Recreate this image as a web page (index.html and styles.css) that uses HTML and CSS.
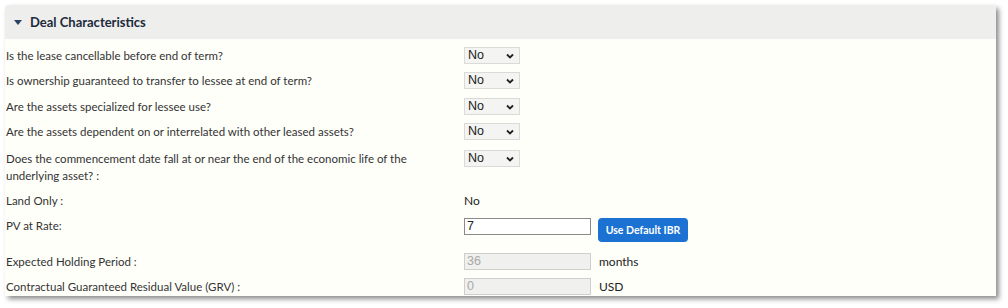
FILE: index.html
```html
<!DOCTYPE html>
<html>
<head>
<meta charset="utf-8">
<link rel="stylesheet" href="styles.css">
</head>
<body>
<div class="panel">
  <div class="panel-header">
    <svg class="caret" width="8" height="5" viewBox="0 0 8 5"><path d="M0 0H8L4 5Z" fill="#2a4468"/></svg>
    <span class="title">Deal Characteristics</span>
  </div>
  <div class="panel-body">
    <div class="row">
      <div class="label">Is the lease cancellable before end of term?</div>
      <div class="value"><div class="select"><span>No</span><svg width="8" height="6" viewBox="0 0 8 6"><path d="M1 1.5L4 4.5L7 1.5" stroke="#222" stroke-width="1.8" fill="none"/></svg></div></div>
    </div>
    <div class="row">
      <div class="label">Is ownership guaranteed to transfer to lessee at end of term?</div>
      <div class="value"><div class="select"><span>No</span><svg width="8" height="6" viewBox="0 0 8 6"><path d="M1 1.5L4 4.5L7 1.5" stroke="#222" stroke-width="1.8" fill="none"/></svg></div></div>
    </div>
    <div class="row r3">
      <div class="label">Are the assets specialized for lessee use?</div>
      <div class="value"><div class="select"><span>No</span><svg width="8" height="6" viewBox="0 0 8 6"><path d="M1 1.5L4 4.5L7 1.5" stroke="#222" stroke-width="1.8" fill="none"/></svg></div></div>
    </div>
    <div class="row">
      <div class="label">Are the assets dependent on or interrelated with other leased assets?</div>
      <div class="value"><div class="select"><span>No</span><svg width="8" height="6" viewBox="0 0 8 6"><path d="M1 1.5L4 4.5L7 1.5" stroke="#222" stroke-width="1.8" fill="none"/></svg></div></div>
    </div>
    <div class="row multi">
      <div class="label">Does the commencement date fall at or near the end of the economic life of the underlying asset? :</div>
      <div class="value"><div class="select"><span>No</span><svg width="8" height="6" viewBox="0 0 8 6"><path d="M1 1.5L4 4.5L7 1.5" stroke="#222" stroke-width="1.8" fill="none"/></svg></div></div>
    </div>
    <div class="row">
      <div class="label">Land Only :</div>
      <div class="value"><span class="plain">No</span></div>
    </div>
    <div class="row pv">
      <div class="label">PV at Rate:</div>
      <div class="value"><div class="input">7</div><button class="btn">Use Default IBR</button></div>
    </div>
    <div class="row">
      <div class="label">Expected Holding Period :</div>
      <div class="value"><div class="input disabled">36</div><span class="unit">months</span></div>
    </div>
    <div class="row">
      <div class="label">Contractual Guaranteed Residual Value (GRV) :</div>
      <div class="value"><div class="input disabled">0</div><span class="unit">USD</span></div>
    </div>
  </div>
</div>
</body>
</html>
```

FILE: styles.css
```css
html, body {
  margin: 0;
  padding: 0;
  background: #ffffff;
}
body {
  width: 1008px;
  height: 308px;
  overflow: hidden;
}
.panel {
  margin: 5px 0 0 5px;
  width: 991px;
  height: 291px;
  background: #fffffa;
  border-radius: 3px 3px 0 0;
  box-shadow: 3px 3px 5px rgba(0, 0, 0, 0.45);
  overflow: hidden;
  font-family: Lato, "Liberation Sans", sans-serif;
  color: #333;
}
.panel-header {
  height: 34px;
  background: #eeeeec;
  border-radius: 3px 3px 0 0;
  display: flex;
  align-items: center;
  padding-left: 9px;
}
.caret {
  margin-right: 8px;
  margin-top: 1px;
}
.title {
  font-weight: 700;
  font-size: 13px;
  color: #1c2a3c;
}
.panel-body {
  padding-top: 4px;
}
.row {
  display: flex;
  align-items: center;
  min-height: 25px;
  font-size: 11.5px;
  line-height: 17px;
}
.row.r3 {
  margin-top: 1px;
}
.row.multi {
  align-items: flex-start;
  margin-top: 2px;
  padding: 4px 0;
}
.row.pv {
  align-items: flex-start;
  height: 36px;
  padding-top: 4px;
  box-sizing: border-box;
}
.label {
  width: 459px;
  padding-left: 1px;
  padding-right: 50px;
  box-sizing: border-box;
  flex: none;
}
.value {
  display: flex;
  align-items: center;
}
.row.pv .value {
  align-items: flex-start;
  padding-top: 1px;
}
.select {
  width: 56px;
  height: 17px;
  box-sizing: border-box;
  border: 1px solid #dadad8;
  background: #f4f4f2;
  display: flex;
  align-items: center;
  justify-content: space-between;
  padding: 0 5px 0 3px;
  font-family: "Liberation Sans", Arial, sans-serif;
  font-size: 12.5px;
  color: #222;
}
.plain {
  font-size: 12px;
  color: #222;
}
.input {
  width: 127px;
  height: 17px;
  box-sizing: border-box;
  border: 1px solid #8a8a8a;
  background: #fff;
  font-family: "Liberation Sans", Arial, sans-serif;
  font-size: 12.5px;
  line-height: 15px;
  padding-left: 2px;
  color: #222;
}
.input.disabled {
  background: #f0f0ee;
  border-color: #cfcfcd;
  color: #a8a8a8;
}
.btn {
  margin-left: 7px;
  height: 24px;
  width: 90px;
  border: none;
  border-radius: 4px;
  background: #1b72d3;
  color: #fff;
  font-family: Lato, "Liberation Sans", sans-serif;
  font-weight: 700;
  font-size: 10.5px;
  padding: 0;
}
.unit {
  margin-left: 8px;
  font-size: 12px;
  color: #222;
}
```
